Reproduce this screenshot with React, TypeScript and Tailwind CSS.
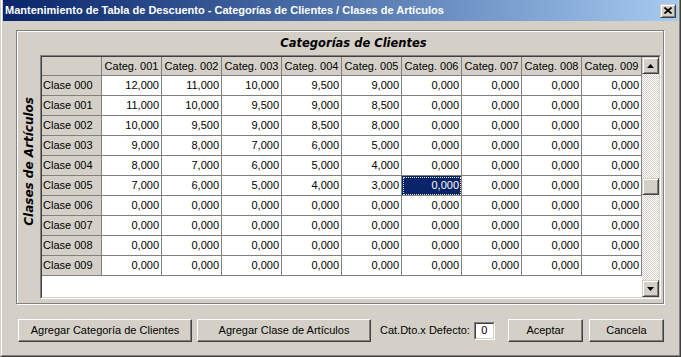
import React from 'react';

const cols = Array.from({ length: 9 }, (_, i) => `Categ. 00${i + 1}`);

// discount values per class, first 5 categories; the rest are zero
const values: number[][] = [
  [12, 11, 10, 9.5, 9],
  [11, 10, 9.5, 9, 8.5],
  [10, 9.5, 9, 8.5, 8],
  [9, 8, 7, 6, 5],
  [8, 7, 6, 5, 4],
  [7, 6, 5, 4, 3],
];

const fmt = (n: number) => n.toFixed(3).replace('.', ',');

const raised =
  'border border-t-white border-l-white border-r-[#404040] border-b-[#404040] shadow-[inset_-1px_-1px_0_#808080]';
const scrollBtn =
  'border border-t-[#d4d0c8] border-l-[#d4d0c8] border-r-[#404040] border-b-[#404040] shadow-[inset_1px_1px_0_#fff,inset_-1px_-1px_0_#808080] bg-[#d4d0c8] flex items-center justify-center';

const Arrow = ({ down }: { down?: boolean }) => (
  <svg width="7" height="4" viewBox="0 0 7 4">
    <polygon points={down ? '0,0 7,0 3.5,4' : '0,4 7,4 3.5,0'} fill="#000" />
  </svg>
);

export default function App() {
  return (
    <div className="w-[681px] h-[357px] bg-[#d4d0c8] border-l border-l-[#d4d0c8] border-r border-r-[#404040] border-b border-b-[#404040] overflow-hidden font-['Liberation_Sans',Arial,sans-serif] text-[11px] text-black">
      <div className="h-full flex flex-col border-l border-l-white border-r border-r-[#808080] border-b border-b-[#808080] px-px">
        {/* Title bar */}
        <div className="h-[21px] shrink-0 flex items-center justify-between bg-linear-to-r from-[#0a246a] to-[#a6caf0] pl-[2px] pr-[2px]">
          <span className="text-white font-bold text-[11px] whitespace-nowrap">
            Mantenimiento de Tabla de Descuento - Categorías de Clientes / Clases de Artículos
          </span>
          <div className={`w-[16px] h-[14px] bg-[#d4d0c8] flex items-center justify-center ${scrollBtn}`}>
            <svg width="8" height="7" viewBox="0 0 8 7">
              <path d="M0.5 0.5 L7.5 6.5 M7.5 0.5 L0.5 6.5" stroke="#000" strokeWidth="1.7" />
            </svg>
          </div>
        </div>

        {/* Group panel */}
        <div className="mt-[9px] ml-[13px] mr-[14px] h-[274px] shrink-0 border border-[#808080] shadow-[inset_1px_1px_0_#fff,1px_1px_0_#fff] pt-px pl-px flex">
          <div className="w-[22px] flex items-center justify-center pb-[12px]">
            <span className="[writing-mode:vertical-rl] rotate-180 font-['DejaVu_Sans',Verdana,sans-serif] font-bold italic text-[12px] whitespace-nowrap">
              Clases de Artículos
            </span>
          </div>
          <div className="flex flex-col w-[621px]">
            <div className="h-[23px] flex items-center justify-center pl-[6px] font-['DejaVu_Sans',Verdana,sans-serif] font-bold italic text-[11.5px]">
              Categorías de Clientes
            </div>
            <div className="h-[244px] border border-t-[#808080] border-l-[#808080] border-r-white border-b-white">
              <div className="h-full border border-t-[#404040] border-l-[#404040] border-r-[#d4d0c8] border-b-[#d4d0c8] flex">
                {/* Table */}
                <div className="w-[600px] bg-white">
                  <div className="flex h-[19px]">
                    <div className="w-[60px] bg-[#d4d0c8] border-r border-b border-[#808080]" />
                    {cols.map((c) => (
                      <div
                        key={c}
                        className="w-[60px] bg-[#d4d0c8] border-r border-b border-[#808080] flex items-center justify-center whitespace-nowrap"
                      >
                        {c}
                      </div>
                    ))}
                  </div>
                  {Array.from({ length: 10 }, (_, r) => (
                    <div key={r} className="flex h-[20px]">
                      <div className="w-[60px] bg-[#d4d0c8] border-r border-b border-[#808080] flex items-center pl-px whitespace-nowrap">
                        Clase 00{r}
                      </div>
                      {cols.map((c, ci) => {
                        const v = values[r]?.[ci] ?? 0;
                        const sel = r === 5 && ci === 5;
                        return (
                          <div
                            key={c}
                            className={`w-[60px] border-r border-b border-[#808080] flex items-center justify-end pr-[2px] ${
                              sel ? 'bg-[#0a246a] text-white outline-1 outline-dotted outline-[#e8e8c0] -outline-offset-2' : ''
                            }`}
                          >
                            {fmt(v)}
                          </div>
                        );
                      })}
                    </div>
                  ))}
                </div>
                {/* Scrollbar */}
                <div className="w-[17px] flex flex-col">
                  <div className={`h-[17px] ${scrollBtn}`}>
                    <Arrow />
                  </div>
                  <div className="flex-1 bg-[repeating-conic-gradient(#fff_0_25%,#d4d0c8_0_50%)] bg-[length:2px_2px] flex flex-col">
                    <div className={`mt-[104px] h-[17px] ${scrollBtn}`} />
                  </div>
                  <div className={`h-[17px] ${scrollBtn}`}>
                    <Arrow down />
                  </div>
                </div>
              </div>
            </div>
          </div>
        </div>

        {/* Bottom buttons */}
        <div className="mt-[15px] ml-[15px] flex items-center">
          <button className={`w-[174px] h-[23px] bg-[#d4d0c8] ${raised}`}>Agregar Categoría de Clientes</button>
          <button className={`ml-[5px] w-[174px] h-[23px] bg-[#d4d0c8] ${raised}`}>Agregar Clase de Artículos</button>
          <span className="ml-[9px] whitespace-nowrap">Cat.Dto.x Defecto:</span>
          <div className="ml-[4px] w-[21px] h-[18px] border border-t-[#808080] border-l-[#808080] border-r-white border-b-white">
            <div className="h-full bg-white border border-t-[#404040] border-l-[#404040] border-r-[#d4d0c8] border-b-[#d4d0c8] flex items-center justify-center">
              0
            </div>
          </div>
          <button className={`ml-[13px] w-[75px] h-[23px] bg-[#d4d0c8] ${raised}`}>Aceptar</button>
          <button className={`ml-[6px] w-[75px] h-[23px] bg-[#d4d0c8] ${raised}`}>Cancela</button>
        </div>
      </div>
    </div>
  );
}
